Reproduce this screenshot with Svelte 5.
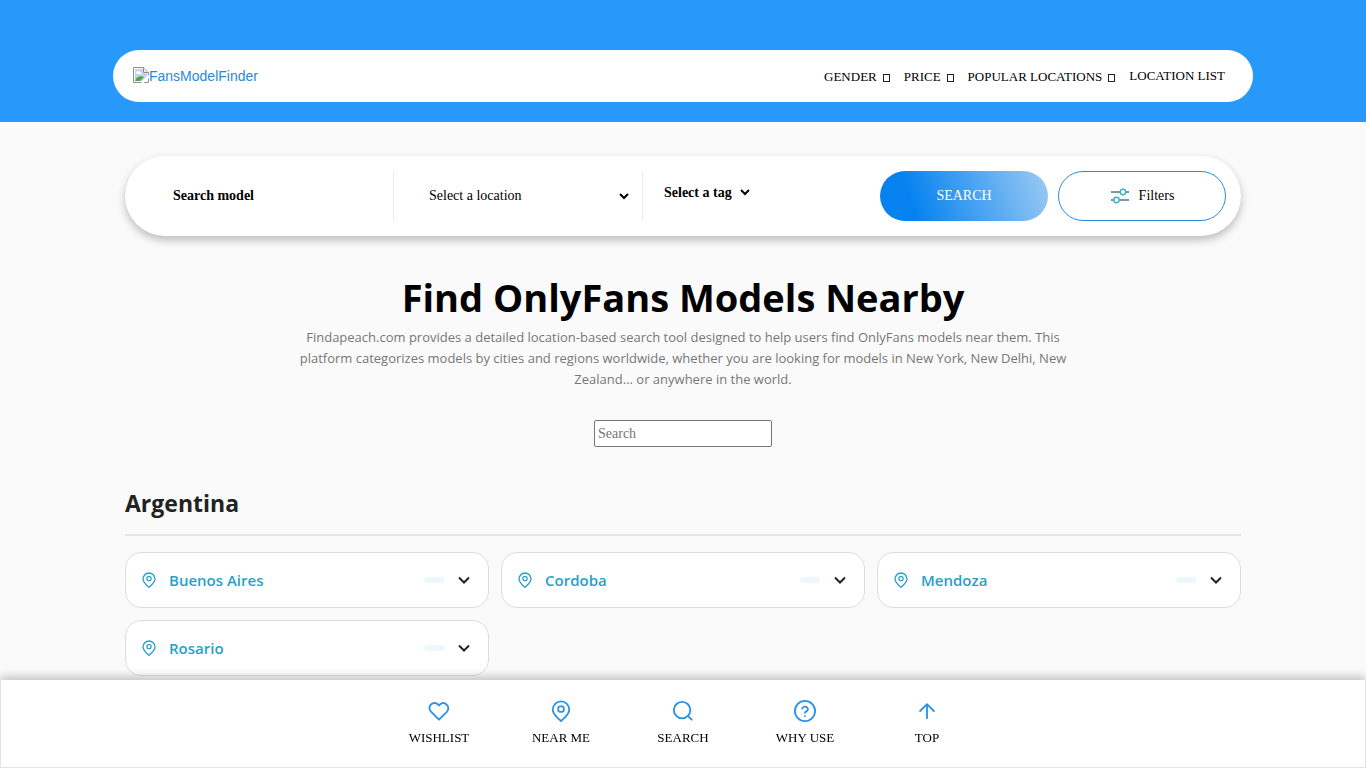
<script>
  const menu = [
    { label: "GENDER", sub: true },
    { label: "PRICE", sub: true },
    { label: "POPULAR LOCATIONS", sub: true },
    { label: "LOCATION LIST", sub: false },
  ];

  const countries = [
    { name: "Argentina", cities: ["Buenos Aires", "Cordoba", "Mendoza", "Rosario"] },
  ];

  const shortcuts = [
    { label: "WISHLIST", icon: "heart" },
    { label: "NEAR ME", icon: "pin" },
    { label: "SEARCH", icon: "search" },
    { label: "WHY USE", icon: "help" },
    { label: "TOP", icon: "up" },
  ];

  let model = $state("");
  let query = $state("");
  let open = $state("");
</script>

{#snippet pin(size)}
  <svg class="pin" width={size} height={size} viewBox="0 0 24 24" aria-hidden="true">
    <path d="M21 10.5c0 5-4.500 8-9 12.500-4.500-4.500-9-7.500-9-12.500a9 9 0 0 1 18 0Z" />
    <rect x="9" y="7" width="6" height="6" rx="2" />
  </svg>
{/snippet}

<header>
  <div class="navbar">
    <a class="logo" href="#home">
      <svg width="16" height="16" viewBox="0 0 16 16" aria-hidden="true">
        <path d="M.5.5h10l5 5v10H.5z" fill="#fff" stroke="#8f8f8f" />
        <path d="M2 2h8v4h4v3l-5 5H2z" fill="#c3d5f0" />
        <path d="M2 14c1-4 5-6 9-4l-4 4z" fill="#4fa83d" />
        <path d="M3 6c0-2 3-3 4-1 2 0 2 2 0 2H4z" fill="#fff" />
        <path d="M16 8v3l-5 5H8z" fill="#fff" />
        <path d="M10.500.5v5h5" fill="#e8e8e8" stroke="#8c8c8c" />
      </svg><span>FansModelFinder</span>
    </a>
    <nav class="menu">
      {#each menu as item}
        <a href="#menu" class:sub={item.sub}>
          {item.label}
          {#if item.sub}<i class="caret"></i>{/if}
        </a>
      {/each}
    </nav>
  </div>
</header>

<main>
  <form class="searchbar" onsubmit={(e) => e.preventDefault()}>
    <div class="field model">
      <input type="text" placeholder="Search model" aria-label="Search model" bind:value={model} />
    </div>
    <div class="field location">
      <select aria-label="Location">
        <option>Select a location</option>
      </select>
    </div>
    <div class="field tag">
      <select aria-label="Tag">
        <option>Select a tag</option>
      </select>
    </div>
    <button class="btn search" type="submit">SEARCH</button>
    <button class="btn filters" type="button">
      <svg width="20" height="16" viewBox="0 0 20 16" aria-hidden="true">
        <path d="M1 4h9M16 4h3M1 12h3M10 12h9" stroke="#4a7c80" stroke-width="1.5" />
        <circle cx="13" cy="4" r="2.7" />
        <circle cx="6.5" cy="12" r="2.7" />
      </svg>
      Filters
    </button>
  </form>

  <section class="intro">
    <h1>Find OnlyFans Models Nearby</h1>
    <p>
      Findapeach.com provides a detailed location-based search tool designed to help users find
      OnlyFans models near them. This platform categorizes models by cities and regions worldwide,
      whether you are looking for models in New York, New Delhi, New Zealand... or anywhere in the
      world.
    </p>
    <input type="text" placeholder="Search" aria-label="Search" bind:value={query} />
  </section>

  {#each countries as country}
    <section class="country">
      <h2>{country.name}</h2>
      <div class="cities">
        {#each country.cities as city}
          <button
            class="city"
            aria-expanded={open === city}
            onclick={() => (open = open === city ? "" : city)}>
            {@render pin(16)}
            <span class="name">{city}</span>
            <span class="count"></span>
            <svg class="chevron" width="12" height="8" viewBox="0 0 12 8" aria-hidden="true">
              <path d="M1 1.5l5 5 5-5" />
            </svg>
          </button>
        {/each}
      </div>
    </section>
  {/each}
</main>

<nav class="bottom">
  {#each shortcuts as item}
    <a href="#{item.icon}">
      {#if item.icon === "pin"}
        {@render pin(22)}
      {:else}
        <svg width="22" height="22" viewBox="0 0 24 24" aria-hidden="true">
          {#if item.icon === "heart"}
            <path d="M20.2 4.900a5.500 5.500 0 0 0-7.200 0L12 6l-1-1.100a5.500 5.500 0 0 0-7.800 7.800L12 21.500l8.800-8.800a5.500 5.500 0 0 0-.6-7.800Z" />
          {:else if item.icon === "search"}
            <circle cx="11" cy="11" r="9" />
            <path d="M17.500 17.500l4 4" />
          {:else if item.icon === "help"}
            <circle cx="12" cy="12" r="11" />
            <path d="M9 9.300a3.200 3.200 0 0 1 6.200 1c0 2-3.200 2.200-3.200 3.700M12 17.500v.1" />
          {:else}
            <path d="M12 20V5M4.500 12L12 4.500l7.500 7.500" />
          {/if}
        </svg>
      {/if}
      <span>{item.label}</span>
    </a>
  {/each}
</nav>

<style>
  :global(body) {
    background: #fafafa;
    color: #000;
    font-family: "Liberation Serif", serif;
    font-size: 14px;
  }
  a {
    color: inherit;
    text-decoration: none;
  }
  button,
  select,
  input {
    font-family: inherit;
    font-size: 14px;
    color: inherit;
  }
  header {
    background: #2699fb;
    padding: 50px 16px 20px;
  }
  .navbar {
    max-width: 1140px;
    height: 52px;
    margin: 0 auto;
    padding: 0 28px 0 20px;
    box-sizing: border-box;
    background: #fff;
    border-radius: 26px;
    display: flex;
    align-items: center;
    justify-content: space-between;
  }
  .logo {
    display: flex;
    align-items: center;
    color: #2a8ad8;
    font-family: "Liberation Sans", sans-serif;
    font-size: 14px;
  }
  .logo svg {
    margin-bottom: 2px;
  }
  .menu {
    display: flex;
    align-items: center;
    gap: 14px;
    font-size: 13px;
  }
  .menu a {
    display: flex;
    align-items: center;
    gap: 6px;
    line-height: 20px;
  }
  .menu .sub {
    padding-top: 2px;
  }
  .caret {
    width: 7px;
    height: 8px;
    box-sizing: border-box;
    border: 1px solid #222;
    margin-top: 2px;
  }
  main {
    max-width: 1116px;
    margin: 34px auto 0;
    padding: 0 16px 100px;
  }
  .searchbar {
    height: 80px;
    padding: 0 15px 0 44px;
    box-sizing: border-box;
    background: #fff;
    border-radius: 40px;
    box-shadow: 0 4px 8px rgba(0, 0, 0, 0.25);
    display: flex;
    align-items: center;
  }
  .field {
    height: 48px;
    display: flex;
    align-items: center;
  }
  .field input,
  .field select {
    border: 0;
    background: none;
    outline: 0;
  }
  .model {
    width: 224px;
    border-right: 1px solid #ececec;
  }
  .model input {
    width: 100%;
    padding: 0 4px;
    font-weight: bold;
  }
  .model input::placeholder {
    color: #000;
  }
  .location {
    width: 248px;
    border-right: 1px solid #ececec;
  }
  .location select {
    width: 207px;
    margin-left: 31px;
    padding-bottom: 2px;
  }
  .tag {
    flex: 1;
    align-items: flex-start;
  }
  .tag select {
    width: 93px;
    margin: 12px 0 0 17px;
    font-weight: bold;
  }
  .btn {
    width: 168px;
    height: 50px;
    margin-left: 10px;
    border-radius: 25px;
    display: flex;
    align-items: center;
    justify-content: center;
    gap: 9px;
  }
  .search {
    border: 0;
    color: #fff;
    background: linear-gradient(70deg, #0582f0 20%, #9ccbf4);
  }
  .filters {
    border: 1px solid #2a8ad8;
    background: #fff;
  }
  .filters circle {
    fill: #fff;
    stroke: #3bb5c4;
    stroke-width: 1.5;
  }
  .intro {
    margin-top: 36px;
    text-align: center;
  }
  h1,
  h2,
  p {
    margin: 0;
    font-family: "Segoe UI", "Open Sans", sans-serif;
  }
  h1 {
    font-size: 38px;
    line-height: 50px;
  }
  p {
    max-width: 800px;
    margin: 5px auto 0;
    color: #777;
    font-size: 13px;
    line-height: 21px;
  }
  .intro input {
    width: 178px;
    height: 27px;
    margin-top: 30px;
    padding: 1px 3px;
    box-sizing: border-box;
    border: 1px solid #767676;
    border-radius: 2px;
    background: #fff;
  }
  .country {
    margin-top: 39px;
  }
  h2 {
    padding-bottom: 14px;
    border-bottom: 2px solid #e6e6e6;
    color: #222;
    font-size: 23px;
    line-height: 34px;
  }
  .cities {
    display: grid;
    grid-template-columns: repeat(3, 1fr);
    gap: 12px;
    margin-top: 16px;
  }
  .city {
    height: 56px;
    padding: 0 18px 0 15px;
    display: flex;
    align-items: center;
    border: 1px solid #ddd;
    border-radius: 16px;
    background: #fff;
    color: #2a9fc9;
    font-family: "Segoe UI", "Open Sans", sans-serif;
    font-size: 15px;
    font-weight: 600;
  }
  .name {
    flex: 1;
    margin-left: 12px;
    text-align: left;
  }
  .count {
    width: 20px;
    height: 6px;
    margin-right: 14px;
    border-radius: 3px;
    background: #ecf8fb;
  }
  .pin {
    fill: none;
    stroke: currentColor;
    stroke-width: 2;
  }
  .chevron {
    fill: none;
    stroke: #222;
    stroke-width: 2;
  }
  .bottom {
    position: fixed;
    right: 0;
    bottom: 0;
    left: 0;
    height: 88px;
    box-sizing: border-box;
    padding-top: 20px;
    background: #fff;
    border: 1px solid #e3e3e3;
    border-top: 0;
    box-shadow: 0 -4px 8px rgba(0, 0, 0, 0.2);
    display: flex;
    justify-content: center;
  }
  .bottom a {
    width: 122px;
    display: flex;
    flex-direction: column;
    align-items: center;
    gap: 8px;
    font-size: 13px;
    line-height: 16px;
  }
  .bottom svg {
    fill: none;
    stroke: #2a93e8;
    stroke-width: 2;
    stroke-linecap: round;
    stroke-linejoin: round;
  }
</style>
